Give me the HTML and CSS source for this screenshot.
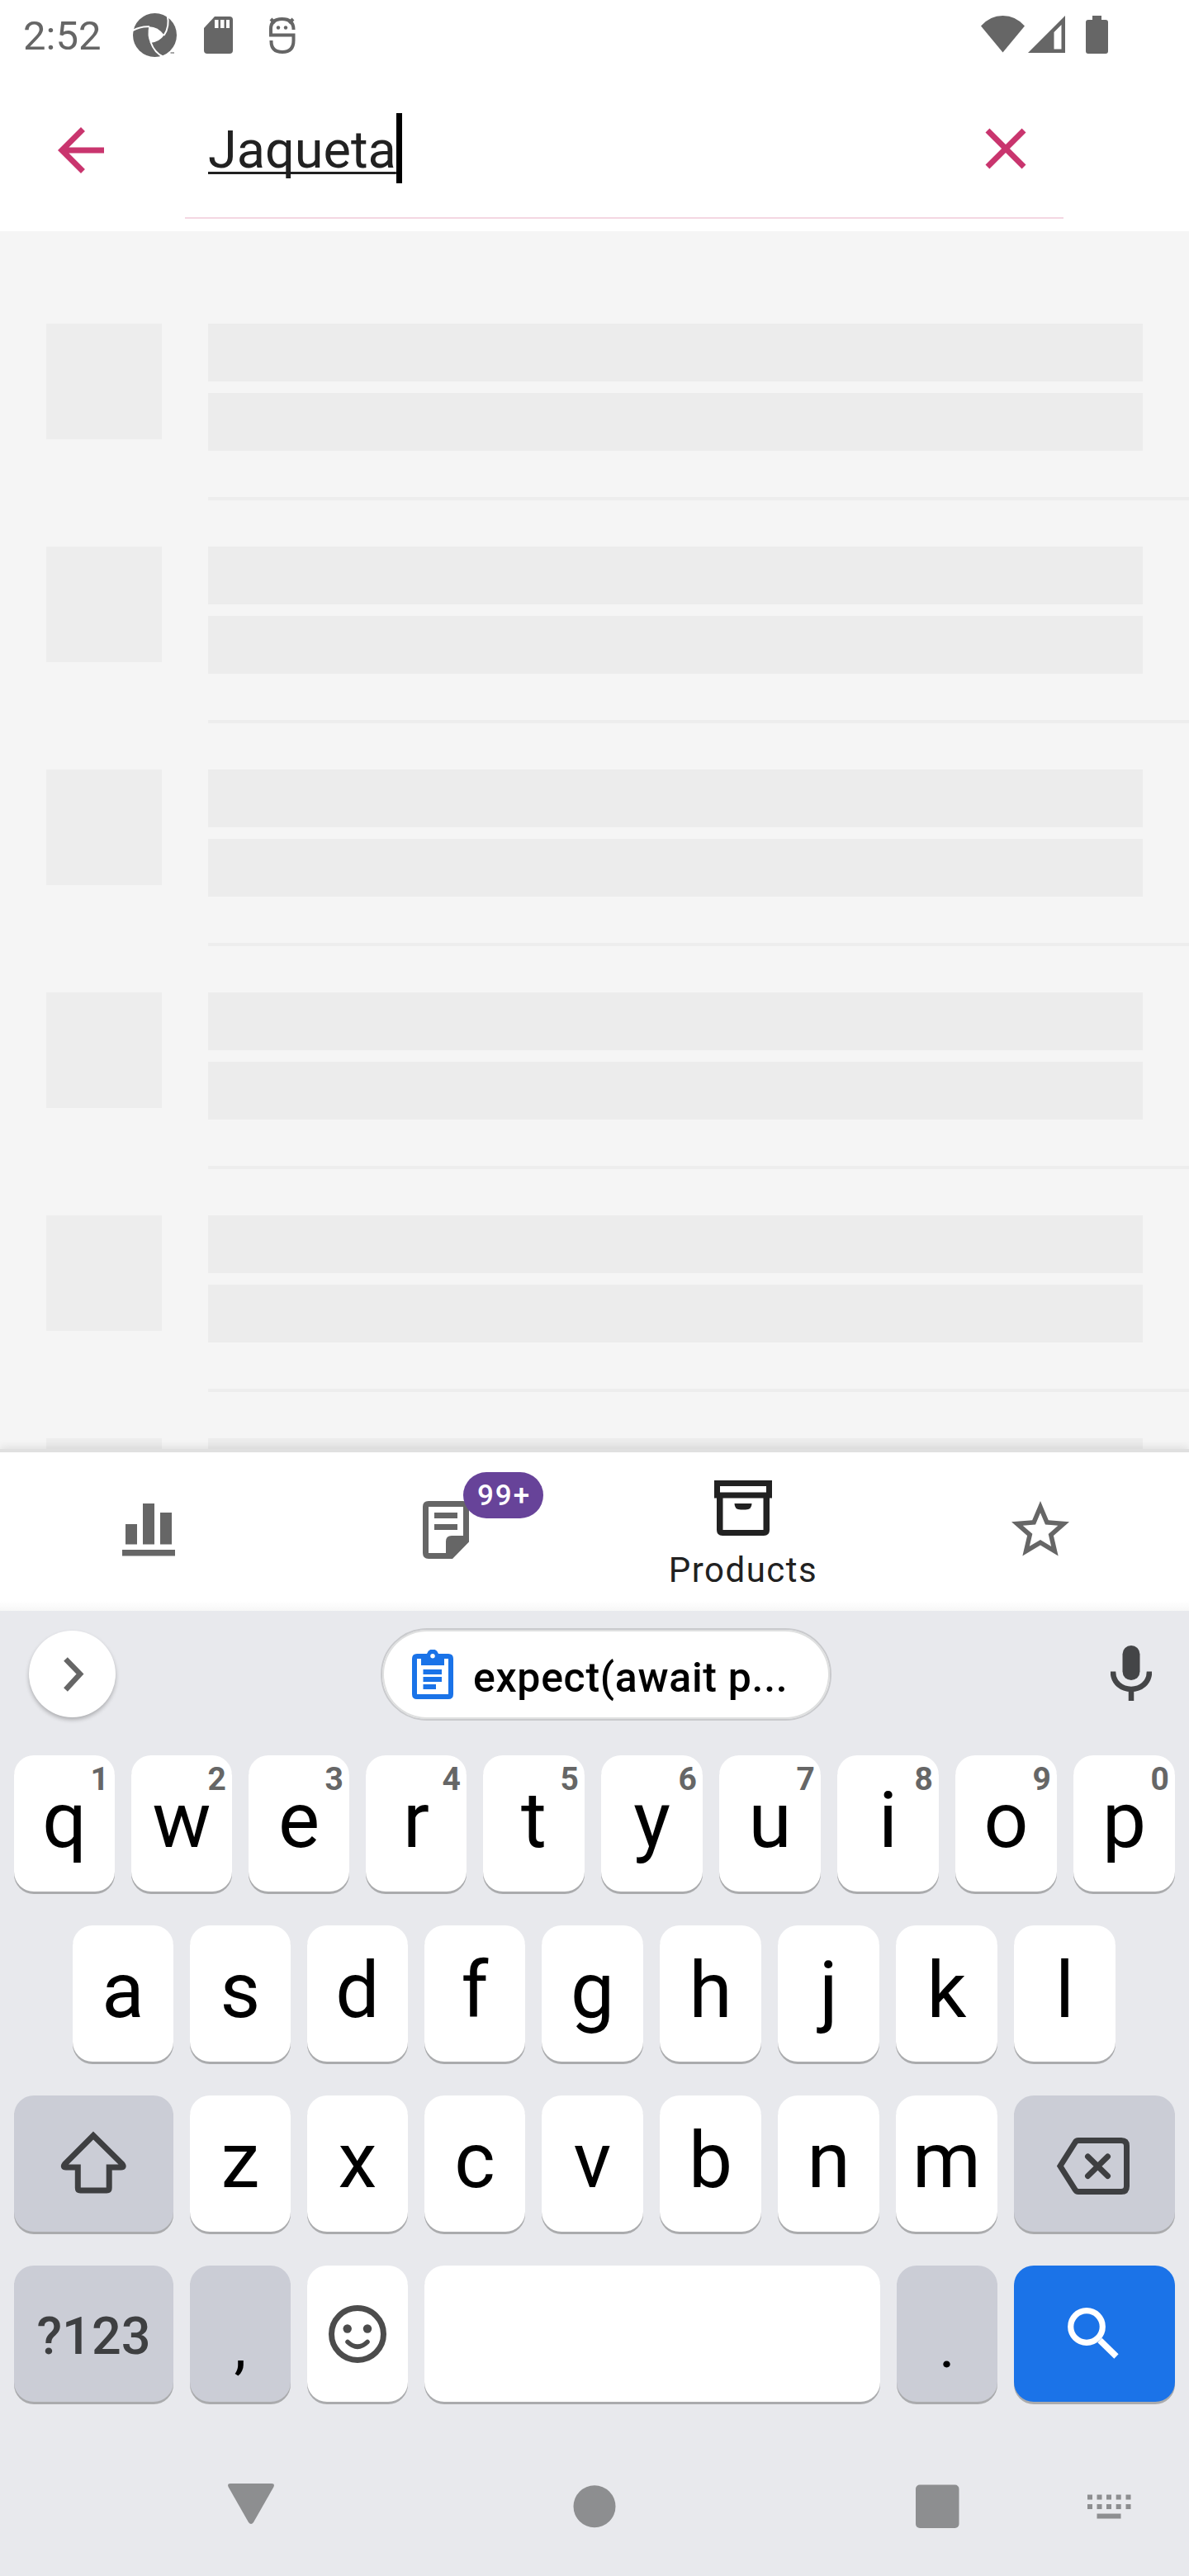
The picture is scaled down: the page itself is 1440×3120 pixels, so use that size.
FILE: index.html
```html
<!DOCTYPE html>
<html lang="pt-BR">
<head>
<meta charset="utf-8">
<title>Products search</title>
<link rel="stylesheet" href="styles.css">
</head>
<body>
<div class="screen">
  <header class="status">
    <span class="clock">2:52</span>
    <svg class="st-aperture" viewBox="161 16 54 54"><circle cx="187.500" cy="42.500" r="26.500" fill="#666"/><g fill="none" stroke="#fff" stroke-width="2"><path d="M160 37.500Q170 31.500 181 32.300"/><path d="M202.500 18Q206 32 198.500 43"/><path d="M198 69Q187 64 182.500 51"/></g><path d="M180.300 32.300Q191 32 198.800 42.500Q193 51 182 52Q178 43 180.300 32.300Z" fill="#fff"/><path d="M196 70L203 64.500H212V70Z" fill="#fff"/><path d="M206.500 64h4.500" stroke="#888" stroke-width="1.500"/></svg>
    <svg class="st-sd" viewBox="0 0 35 45"><path d="M13 0H31Q35 0 35 4V41Q35 45 31 45H4Q0 45 0 41V14Z" fill="#666"/><path d="M13 4h4.500v10H13zM20 4h4.500v10H20zM27 4h4v10H27z" fill="#fff"/></svg>
    <svg class="st-bug" viewBox="0 0 32 46"><path d="M2 16V15Q2 3 15.500 3T29.500 15V16M2 14V22.500H29.500V29Q29.500 43 16 43T2.500 30V29" fill="none" stroke="#666" stroke-width="4"/><path d="M2 3L7 8M29 3L24 8" stroke="#666" stroke-width="4"/><circle cx="11" cy="13.500" r="2.200" fill="#666"/><circle cx="20" cy="13.500" r="2.200" fill="#666"/></svg>
    <svg class="st-right" viewBox="1188 19 154 46" fill="#666"><path d="M1188 31.500Q1199 19 1214.500 19T1241 31.500L1214.500 63.500Z"/><path fill-rule="evenodd" d="M1290 19V64H1245ZM1276.500 39V59.500H1285.500V30Z"/><path d="M1323 19H1334V24H1339Q1342 24 1342 27V62Q1342 65 1339 65H1318Q1315 65 1315 62V27Q1315 24 1318 24H1323Z"/></svg>
  </header>

  <div class="search">
    <svg class="back" viewBox="0 0 24 24"><path d="M20 11H7.830l5.590-5.590L12 4l-8 8 8 8 1.410-1.410L7.830 13H20z"/></svg>
    <div class="field"><span class="typed">Jaqueta</span><i class="caret"></i>
      <svg class="clear" viewBox="0 0 24 24"><path d="M19 6.410L17.590 5 12 10.590 6.410 5 5 6.410 10.590 12 5 17.590 6.410 19 12 13.410 17.590 19 19 17.590 13.410 12z"/></svg>
    </div>
  </div>

  <main class="list">
    <div class="item"><b class="thumb"></b><div class="lines"><b></b><b></b></div></div>
    <div class="item"><b class="thumb"></b><div class="lines"><b></b><b></b></div></div>
    <div class="item"><b class="thumb"></b><div class="lines"><b></b><b></b></div></div>
    <div class="item"><b class="thumb"></b><div class="lines"><b></b><b></b></div></div>
    <div class="item"><b class="thumb"></b><div class="lines"><b></b><b></b></div></div>
    <div class="item"><b class="thumb"></b><div class="lines"><b></b><b></b></div></div>
  </main>

  <nav class="tabs">
    <div class="tab"><svg class="ic" viewBox="138 1811 84 84" fill="#666"><path d="M152 1846h14v24.500h-14zM173 1821h14v49.500h-14zM194 1832h14v38.500h-14zM148 1877h64v7.500h-64z"/></svg></div>
    <div class="tab"><svg class="ic" viewBox="498 1811 84 84"><path fill="#666" fill-rule="evenodd" d="M519 1818H561Q568 1818 568 1825V1867.500L548 1888H519Q512 1888 512 1881V1825Q512 1818 519 1818ZM519 1825V1881H540V1867Q540 1860 547 1860H561V1825ZM526 1832H554V1839H526ZM526 1846H554V1853H526Z"/></svg><span class="badge">99+</span></div>
    <div class="tab active"><svg class="ic" viewBox="858 1784 84 84" fill="#212121"><path fill-rule="evenodd" d="M865 1793H935V1814.500H932V1853Q932 1860 925 1860H875Q868 1860 868 1853V1814.500H865ZM872 1800V1807.500H928V1800ZM875.500 1814.500V1853H924.500V1814.500Z"/><path d="M889.500 1821H910.500Q910.500 1828.500 903 1828.500H897Q889.500 1828.500 889.500 1821Z"/></svg><span>Products</span></div>
    <div class="tab"><svg class="ic" viewBox="0 0 24 24" fill="#666"><path d="M22 9.240l-7.190-.620L12 2 9.190 8.630 2 9.240l5.460 4.730L5.820 21 12 17.270 18.180 21l-1.630-7.030L22 9.240zM12 15.400l-3.760 2.270 1-4.280-3.320-2.880 4.380-.380L12 6.100l1.710 4.040 4.380.380-3.320 2.880 1 4.280L12 15.400z"/></svg></div>
  </nav>

  <section class="keyboard">
    <div class="suggest">
      <span class="more"><svg viewBox="0 0 105 105"><path d="M44.500 34.500L62 52.500L44.500 71.500" fill="none" stroke="#666" stroke-width="6.500"/></svg></span>
      <span class="chip"><svg viewBox="499 1998 50 60"><path fill="#1a73e8" fill-rule="evenodd" d="M517 2003Q519 1997.500 524 1997.500T531 2003H543Q549 2003 549 2009V2052Q549 2058 543 2058H505Q499 2058 499 2052V2009Q499 2003 505 2003ZM505 2009V2052H543V2009H538V2017H510V2009ZM524 2003A2.600 2.600 0 1 0 524 2008.500A2.600 2.600 0 1 0 524 2003ZM512.500 2022H535V2028H512.500ZM512.500 2031H535V2037H512.500ZM512.500 2040H528V2046H512.500Z"/></svg><span class="chip-text">expect(await p...</span></span>
      <svg class="mic" viewBox="0 0 50 68"><rect x="14.500" y="0" width="21" height="42" rx="10.500" fill="#444547"/><path d="M3 31.500C3 60 47 60 47 31.500M25 52V67" fill="none" stroke="#444547" stroke-width="6.500"/></svg>
    </div>
    <div class="row">
      <div class="key"><sup>1</sup>q</div><div class="key"><sup>2</sup>w</div><div class="key"><sup>3</sup>e</div><div class="key"><sup>4</sup>r</div><div class="key"><sup>5</sup>t</div><div class="key"><sup>6</sup>y</div><div class="key"><sup>7</sup>u</div><div class="key"><sup>8</sup>i</div><div class="key"><sup>9</sup>o</div><div class="key"><sup>0</sup>p</div>
    </div>
    <div class="row inset">
      <div class="key">a</div><div class="key">s</div><div class="key">d</div><div class="key">f</div><div class="key">g</div><div class="key">h</div><div class="key">j</div><div class="key">k</div><div class="key">l</div>
    </div>
    <div class="row">
      <div class="key wide grey"><svg viewBox="17 2538 193 165"><path d="M113 2586.500L78.500 2621Q75.500 2625 80 2625H94.300V2650Q94.300 2653 97.300 2653H129.200Q132.200 2653 132.200 2650V2625H146.500Q151 2625 148 2621Z" fill="none" stroke="#3e3f41" stroke-width="7"/></svg></div>
      <div class="key">z</div><div class="key">x</div><div class="key">c</div><div class="key">v</div><div class="key">b</div><div class="key">n</div><div class="key">m</div>
      <div class="key wide end grey"><svg viewBox="1228 2538 195 165" fill="none" stroke="#3e3f41" stroke-width="7"><path d="M1306 2592.500H1358Q1364.500 2592.500 1364.500 2599V2648Q1364.500 2654.500 1358 2654.500H1306Q1303.500 2654.500 1302 2652L1284 2623.500L1302 2595Q1303.500 2592.500 1306 2592.500Z"/><path d="M1317.500 2612L1341.500 2635.500M1341.500 2612L1317.500 2635.500" stroke-linecap="round"/></svg></div>
    </div>
    <div class="row">
      <div class="key wide grey sym">?123</div>
      <div class="key grey punct">,</div>
      <div class="key"><svg viewBox="372 2744 122 165"><circle cx="433" cy="2827" r="31.500" fill="none" stroke="#4c4c4c" stroke-width="7"/><circle cx="420.700" cy="2820.500" r="5.200" fill="#4c4c4c"/><circle cx="445" cy="2820.500" r="5.200" fill="#4c4c4c"/><path d="M421 2836.500Q433 2848 445 2836.500" fill="none" stroke="#4c4c4c" stroke-width="5.500" stroke-linecap="round"/></svg></div>
      <div class="key space"></div>
      <div class="key grey punct">.</div>
      <div class="key wide end blue"><svg viewBox="1228 2744 195 165" fill="none" stroke="#fff"><circle cx="1316" cy="2818" r="19.300" stroke-width="7.200"/><path d="M1332 2834.500L1352 2854" stroke-width="7.500"/></svg></div>
    </div>
    <svg class="sysnav" viewBox="0 2990 1440 90" fill="#8d8e90"><path d="M279 3008H329Q333 3008 331.500 3012L307 3055Q304 3059 301 3055L276.500 3012Q275 3008 279 3008Z"/><circle cx="720" cy="3035.700" r="25.500"/><rect x="1109" y="3009.500" width="52.500" height="52.500" rx="5"/><path d="M1317 3021.500h6v6h-6zM1328.500 3021.500h6v6h-6zM1340 3021.500h6v6h-6zM1351.700 3021.500h6v6h-6zM1363.500 3021.500h6v6h-6zM1317 3033h6v6h-6zM1328.500 3033h6v6h-6zM1340 3033h6v6h-6zM1351.700 3033h6v6h-6zM1363.500 3033h6v6h-6zM1328.500 3044.500h29v6h-29z"/></svg>
  </section>
</div>
</body>
</html>
```
FILE: styles.css
```css
* { box-sizing: border-box; }
body { margin: 0; font-family: Roboto, "Liberation Sans", sans-serif; }
svg { display: block; flex: none; }
.screen { width: 1440px; height: 3120px; display: flex; flex-direction: column; overflow: hidden; background: #fff; }

.status { height: 88px; display: flex; align-items: flex-start; color: #666; flex: none; }
.clock { font-size: 49px; line-height: 58px; width: 133px; margin: 15px 0 0 28px; }
.st-aperture { width: 54px; height: 54px; margin-top: 16px; }
.st-sd { width: 35px; height: 45px; margin: 20px 0 0 32px; }
.st-bug { width: 32px; height: 46px; margin: 20px 0 0 44px; }
.st-right { width: 154px; height: 46px; margin: 19px 98px 0 auto; }

.search { height: 192px; flex: none; display: flex; fill: #c9356e; }
.back { width: 84px; height: 84px; margin: 52px 84px 0 56px; }
.field { width: 1064px; height: 177px; border-bottom: 2px solid #f4d7e2; padding: 49px 28px 0; display: flex; align-items: flex-start; }
.typed { font-size: 63px; line-height: 74px; color: #212121; margin-top: 8px; text-decoration: underline; text-decoration-thickness: 3px; text-decoration-skip-ink: none; text-underline-offset: 5px; }
.caret { width: 7px; height: 85px; background: #000; }
.clear { width: 84px; height: 84px; margin: 1px 0 0 auto; }

.list { height: 1475px; flex: none; overflow: hidden; background: #f5f5f5; padding-top: 112px; }
.item { height: 270px; padding-left: 56px; display: flex; gap: 56px; }
.thumb { width: 140px; height: 140px; background: #ededed; }
.lines { flex: 1; height: 214px; padding-right: 56px; border-bottom: 4px solid #ededed; display: flex; flex-direction: column; gap: 14px; }
.lines b { height: 70px; background: #ececec; }

.tabs { height: 196px; flex: none; border-top: 4px solid #e0e0e0; background: linear-gradient(#fff 180px, #f7f7f7); display: grid; grid-template-columns: repeat(4, 1fr); box-shadow: 0 -2px 10px rgba(0,0,0,.1); position: relative; }
.tab { display: flex; flex-direction: column; align-items: center; padding-top: 52px; position: relative; }
.tab.active { padding-top: 25px; }
.ic { width: 84px; height: 84px; }
.tab.active span { font-size: 42px; line-height: 50px; letter-spacing: 1.5px; color: #212121; margin-top: 9px; }
.badge { position: absolute; left: 201px; top: 24px; width: 97px; height: 56px; border-radius: 28px; background: #674399; color: #fff; font-size: 35px; line-height: 58px; font-weight: 500; letter-spacing: 2px; text-align: center; padding-left: 2px; }

.keyboard { height: 1169px; flex: none; background: #e8e9ed; position: relative; }
.suggest { height: 175px; display: flex; align-items: flex-start; padding: 21px 45px 0 35px; }
.more { width: 105px; height: 105px; margin-top: 3px; border-radius: 50%; background: #fff; box-shadow: 0 3px 5px rgba(0,0,0,.25); }
.chip { width: 546px; height: 112px; margin-left: 321px; border: 2px solid #c9cacd; box-shadow: inset 0 0 0 2px #dfe0e0; border-radius: 56px; background: #fff; display: flex; align-items: flex-start; padding: 24px 0 0 36px; }
.chip svg { width: 50px; height: 60px; }
.chip-text { font-size: 50px; line-height: 60px; font-weight: 500; letter-spacing: .7px; margin: 4px 0 0 24px; color: #000; white-space: nowrap; }
.mic { width: 50px; height: 68px; margin: 21px 0 0 auto; }
.row { height: 206px; padding: 0 17px; display: flex; gap: 20px; }
.row.inset { padding: 0 88px; }
.key { flex: 0 0 123px; height: 165px; border-radius: 24px; background: #fff; box-shadow: 0 3px 0 #aaabad; position: relative; font-size: 94.500px; line-height: 157px; text-align: center; color: #000; }
.key:nth-child(-n+4) { flex-basis: 122px; }
.key sup { position: absolute; right: 7px; top: 6px; font-size: 39px; line-height: 46px; font-weight: 700; color: #666; }
.key svg { width: 100%; height: 165px; }
.key.wide { flex-basis: 193px; }
.key.end { flex-basis: 195px; }
.key.space { flex-basis: 552px; }
.grey { background: #cbcdd6; }
.blue { background: #1b73e8; }
.key.sym { font-size: 63px; font-weight: 500; line-height: 172px; color: #3e3f41; }
.key.punct { flex-basis: 122px; font-size: 75px; line-height: 195px; }
.sysnav { width: 1440px; height: 90px; margin-top: 40px; }
```
